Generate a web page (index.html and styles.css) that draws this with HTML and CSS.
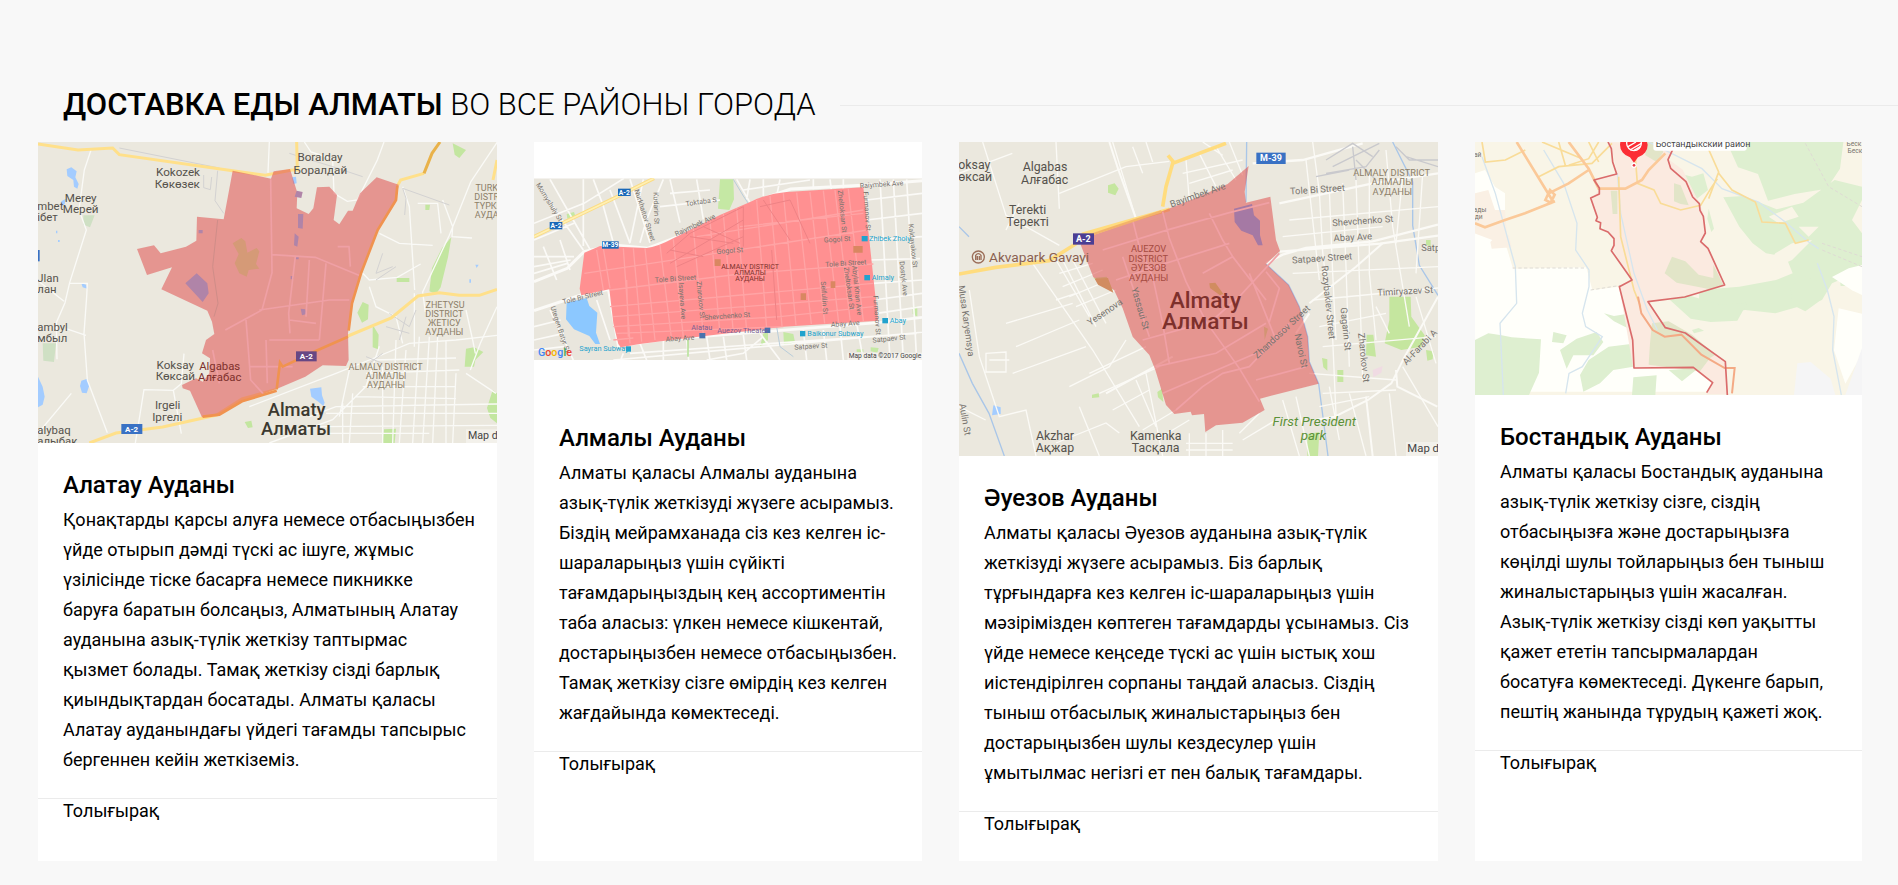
FILE: index.html
```html
<!DOCTYPE html>
<html lang="kk">
<head>
<meta charset="utf-8">
<title>Доставка еды Алматы</title>
<link rel="stylesheet" href="styles.css">
</head>
<body>
<section class="districts">
  <h2 class="heading"><span><b>ДОСТАВКА ЕДЫ АЛМАТЫ</b> ВО ВСЕ РАЙОНЫ ГОРОДА</span></h2>
  <div class="cards">

    <article class="card">
      <svg class="map" viewBox="6 6 1377 903" role="img" aria-label="Алатау ауданының картасы">
        <rect x="6" y="6" width="1377" height="903" fill="#ebe8de"/>
        <g fill="#a3ccff">
          <path d="M92 88l14-6 16 12-4 18 10 20-4 14-10-6-2-20-18-12zM76 184l14-8-4 16-10 8zM136 430l14 4 4 12-14-4zM6 710l14 30 6 30-6 24-14 8zM136 722l18-6 6 20-8 24-14-2-6-20zM822 746l34-4 2 24 8 22-4 10-14-12-22-16zM768 112l12-2 2 20-10 2zM60 272h4v8h-4zM66 300h5v6h-5zM1318 374l10 0-6 10zM1300 418h5v10h-5z"/>
        </g>
        <g fill="#c3e6a0">
          <path d="M1246 292l-10 60-22 90-14 20-20-8 8-70 30-60zM1082 414h38v12h-38zM980 486l18 8-2 44-18 10-14-30zM1010 554l18 30-2 44-16-6zM1290 626l24-4 28 14-24 24-4 20-28 0zM1370 750l13 10v90l-20-16-10-30zM1044 868l36-2-4 43h-36zM626 846l20-4 4 20-14 2zM1250 10l40 20-20 24-14-10zM1168 194l14 0-2 16-12 0z"/>
          <path d="M142 226h34l-14 36-20-8zM20 610h40l-6 56-32-4z" fill="#cfe0c4"/>
        </g>
        <g fill="none" stroke="#fafaf7" stroke-width="4">
          <path d="M165 30l-20 60-16 120 22 60-50 158-14 60-26 60 2 110M100 430l54 0-2 40-8 110 10 140 60 158M84 484l-76-60M90 566l60 20M298 909l26-160 88 2 24-20 8-90M412 751l24 130M6 880l100-120M700 6l-4 92M805 6l20 30 60 20M890 60l4 100 40 24 30-4 60-120 20-54"/>
          <path d="M1384 6l-80 120-64 160-80 170 8 60M1100 140l20 60 16 250M1145 190l60 0 10 90M1220 180l30 80-2 30 60 4M1030 280l60 30 100 6M980 400l20 20 84-8 70-40M1000 440l20 60 60 30 20 80M1135 460v160M1383 500l-50 110-30 80M1290 510l20 90 8 40"/>
          <path d="M640 800l260-100 100-40 120-50 140-10 123-14M820 830l80-30 483-8M910 830l30-140M700 909l190-70 100-100 40-120M870 820l513 0M850 860l533-4M1150 590l-20 319M1180 590l-20 319M1205 590l-15 319M1230 600l0 309M1260 700l-10 209M1080 600l-10 309M1110 630l-20 279M1040 680l0 229M980 740l280 0M960 770l300 6M990 700l280-10M1010 660l250-6M880 880l300 0M920 790l0 119M950 760l-10 149M1290 700l90 60"/>
        </g>
        <g fill="none" stroke="#d3d2d2" stroke-width="3"><path d="M545 92l-8 90 26 38M503 105l0 38 20 6 4-38M250 24l300 60M760 40l130 40 90 30M1100 145l10 30-4 50M1040 340l-20 60 50-20M1020 420l60-40M1060 520l60 40 20-50M1050 560l70 20M1090 600l20-70M990 650l50 20M1000 670l40-30M1100 145l140 50"/></g>
        <g fill="none" stroke="#ffe08a" stroke-width="9">
          <path d="M6 12l120 18 104-6 20 20 340 48 98 14 80-16h16l-2-84M1084 138l10-18 70-20M936 588l130-54 80-66 64-10 60 8 60 0 53-18M160 909l80-30 140-18 162-36 76-48 100-28M1383 60l-12 60"/>
          <path d="M1164 100l24-60 24-34" stroke="#e9b24a"/>
        </g>
        <path d="M590 92L705 116L713 94L762 87L784 158L782 205L818 222L832 205L843 142L880 140L903 165L893 240L910 253L936 212L950 212L972 160L1022 112L1088 134L1080 185L1025 270L975 400L948 490L936 580L938 660L930 678L860 676L808 710L720 748L630 780L548 824L498 832L462 752L440 745L438 735L480 715L500 725L520 700L522 655L498 640L510 600L535 582L528 545L514 512L376 448L408 382L333 405L303 327L354 316L374 340L450 320L481 302L483 230L563 238z" fill="#de4c4c" fill-opacity=".53"/>
        <path d="M590 310l26-16 12 10 6 34 28-14 8 10-10 38 10 14-32 4-6 20-22-10-14-30 12-28z" fill="#d59a77"/>
        <path d="M448 430l34-30 32 30 4 30-18 26zM782 152l18 4-4 18-20-4zM786 222l16 0-2 44-14-2zM776 280l12 10-4 30-10-4zM794 506l14 2 4 14-14 4zM488 270h12v10h-12zM780 348h8v10h-8zM764 408h8v10h-8z" fill="#b084a8"/>
        <g fill="none" stroke="#efa0a5" stroke-width="5"><path d="M704 118l4 280-30 112-110 60M708 344l130 8 136 56M778 350l-20 170 4 60M630 540l14 180 40 44M670 510l210-30 60 0M870 370l-20 230M820 360l-10 170M550 730l-20-100M700 600l150 0M690 600l4 130M905 320l34 0 4 60M640 680l130 0M760 540l80 10"/></g>
        <path d="M936 590l-90 40-106 50-8-12-10 80M1084 138l-4 42-55 90-50 130-27 90-10 82M500 830l50-6 68-40 104-32" fill="none" stroke="#f0934f" stroke-width="8"/>
        <path d="M545 240l-15 140 16 110-12 40" fill="none" stroke="#cf8d88" stroke-width="3"/>
        <rect x="780" y="634" width="62" height="30" fill="#674784"/><rect x="256" y="852" width="63" height="30" fill="#3971c4"/><rect x="6" y="330" width="5" height="34" fill="#3971c4"/>
        <g class="shield" font-size="24"><text x="811" y="658">A-2</text><text x="287" y="876">A-2</text></g>
        <g class="place" font-size="35"><text x="426" y="109">Kokozek</text><text x="424" y="143">Көкөзек</text><text x="852" y="64">Boralday</text><text x="853" y="102">Боралдай</text><text x="134" y="186">Merey</text><text x="134" y="219">Мерей</text><text x="418" y="687">Koksay</text><text x="418" y="721">Көксай</text><text x="395" y="808">Irgeli</text><text x="394" y="842">Іргелі</text></g>
        <g class="place maroon" font-size="34"><text x="551" y="689">Algabas</text><text x="551" y="724">Алғабас</text></g>
        <g class="place edge-left" font-size="34"><text x="4" y="210">mbet</text><text x="4" y="244">ібет</text><text x="4" y="426">Jlan</text><text x="4" y="460">лан</text><text x="4" y="572">ambyl</text><text x="4" y="606">мбыл</text><text x="4" y="881">alybaq</text><text x="4" y="914">алыбақ</text></g>
        <g class="area" font-size="27"><text x="1227" y="505">ZHETYSU</text><text x="1225" y="532">DISTRICT</text><text x="1225" y="559">ЖЕТІСУ</text><text x="1225" y="586">АУДАНЫ</text><text x="1049" y="691">ALMALY DISTRICT</text><text x="1050" y="718">АЛМАЛЫ</text><text x="1050" y="745">АУДАНЫ</text><text x="1352" y="153">TURK</text><text x="1352" y="180">DISTR</text><text x="1352" y="206">ТҮРКІ</text><text x="1352" y="233">АУДА</text></g>
        <g class="city" font-size="55"><text x="782" y="829">Almaty</text><text x="780" y="886">Алматы</text></g>
        <rect x="1290" y="868" width="93" height="41" fill="#f3f1eb"/><text class="credit" x="1296" y="898" font-size="32">Map d</text>
      </svg>
      <div class="body">
        <h3>Алатау Ауданы</h3>
        <p>Қонақтарды қарсы алуға немесе отбасыңызбен<br>үйде отырып дәмді түскі ас ішуге, жұмыс<br>үзілісінде тіске басарға немесе пикникке<br>баруға баратын болсаңыз, Алматының Алатау<br>ауданына азық-түлік жеткізу таптырмас<br>қызмет болады. Тамақ жеткізу сізді барлық<br>қиындықтардан босатады. Алматы қаласы<br>Алатау ауданындағы үйдегі тағамды тапсырыс<br>бергеннен кейін жеткіземіз.</p>
      </div>
      <footer class="more"><a href="#alatau">Толығырақ</a></footer>
    </article>

    <article class="card">
      <svg class="map" viewBox="12 6 1164 762" role="img" aria-label="Алмалы ауданының картасы">
        <defs><clipPath id="almaly-frame"><rect x="12" y="115" width="1164" height="545"/></clipPath></defs>
        <rect x="12" y="6" width="1164" height="762" fill="#fff"/>
        <g clip-path="url(#almaly-frame)">
          <rect x="12" y="115" width="1164" height="545" fill="#e9e6dd"/>
          <path d="M570 118h40l2 60-14 32-34-4zM110 222l22-6 4 12-24 8zM1148 500l14 0 0 30-14-8zM760 576l30 6 6 30-34 4zM700 580l14-4 0 24-24 20zM980 628h20v8h-20zM1022 622l24 2-4 14-20-4z" fill="#c5e8a4"/>
          <g fill="none" stroke="#fbfaf7" stroke-width="5">
            <path d="M30 140l60 90 70 100M60 118l80 140 40 70M160 118l0 200M190 118l30 80 30 110M12 250l150-60 120-75M12 300l120-50M240 150l60 160M300 118l60 190M340 118l-40 190M12 350l120 0M12 380l110-20M12 400l100-30M40 320l40 100M90 300l30 90M400 118l-50 120-20 70M420 118l30 130M420 160l120-10M390 200l180-20M500 118l20 120M620 118l40 70M660 118l-10 60M700 118l0 50M750 118l-10 50M640 150l200-30M850 118l0 30M900 118l4 30M940 118l0 30M1050 118l30 542M1090 118l30 542M1130 118l30 542M1010 180l166-20M1010 240l166-20M1020 300l156-10M1020 360l150-4M1030 430l146-10M1030 480l146-20M1040 520l136-20"/>
            <path d="M12 560l80-20M12 600l90-20M60 510l70 150M12 630l90-10M200 480l40 120M250 660l1000-90M280 640l-8 20M330 610l20 50M400 600l0 60M470 600l6 60M530 590l10 70M580 590l10 70M640 585l10 75M690 580l60 80M820 570l10 90M880 570l10 90M930 560l10 100M980 550l20 110M300 640l860-60M700 590l-60 50-110 20"/>
            <path d="M12 425l100-40 50-50 90-20 100 10 210-80 110-60 110-38 230-12 260-20M12 512l150-50 76-14" stroke-width="9"/>
            <path d="M235 448l30 170 140-20 260-20 380-30 131-16" stroke-width="8"/>
          </g>
          <path d="M12 290l250-120 110-55" fill="none" stroke="#fbdc84" stroke-width="11"/>
          <path d="M12 290l250-120 110-55" fill="none" stroke="#fff0b4" stroke-width="5"/>
          <path d="M610 118l30 50 20 30 4 30M740 560l10 60 40 30" fill="none" stroke="#b9cdda" stroke-width="3"/>
          <path d="M474 600v50" fill="none" stroke="#a9dd87" stroke-width="4"/>
          <path d="M110 488l60-14 8 24 24 20-4 60 12 34-14 0-18-24-46-20-24-30z" fill="#8cc8ff"/>
          <path d="M163 338L210 318L350 324Q380 322 430 295L570 225L655 188Q710 160 770 156L1000 142L1018 300L1044 542L760 560L405 602Q320 612 272 622L265 612L250 550L238 448L154 466L149 446z" fill="#ff8c8e" fill-opacity=".96"/>
          <g fill="none" stroke="#ffa4a5" stroke-width="4">
            <path d="M163 400l200-30 650-100M240 450l390-48 400-30M240 500l790-70M250 530l780-60M250 560l500-30 280-30M260 580l500-20M220 325l20 120M280 325l20 285M310 325l25 280M345 325l30 275M390 315l35 285M430 298l30 295M490 265l30 320M540 242l30 340M580 222l30 356M620 205l30 368M680 180l30 385M720 168l36 390M760 160l38 396M800 158l44 394M840 156l44 394M880 152l46 396M915 150l46 396M955 147l45 396M290 420l5 170M630 260l370-40M500 290l500-80M250 600l60-6M200 330l20 120"/>
          </g>
          <g fill="none" stroke="#ee8285" stroke-width="3"><path d="M410 340l70-60 160-80M420 370l220-130M440 380l200-90M640 200v120M480 290l130 20M520 260l110 50M690 200l90-20 60 130M700 180l80 120M420 330l100 20M725 330l15 210"/></g>
          <path d="M970 318h28v20h-28zM554 358h18v20h-18zM812 460h16v20h-16zM902 424h14v20h-14z" fill="#d98761"/>
          <rect x="264" y="146" width="38" height="22" fill="#1a68b8"/><rect x="59" y="246" width="38" height="22" fill="#1a68b8"/><rect x="216" y="304" width="50" height="22" fill="#1a68b8"/>
          <g class="shield" font-size="20"><text x="283" y="164">A-2</text><text x="78" y="264">A-2</text><text x="241" y="322">M-39</text></g>
          <g class="street" font-size="21">
            <text transform="translate(1055 140) rotate(-4)">Raiymbek Ave</text><text transform="translate(498 262) rotate(-25)">Raiymbek Ave</text><text transform="translate(922 305) rotate(-4)">Gogol St</text><text transform="translate(600 339) rotate(-4)">Gogol St</text><text transform="translate(948 377) rotate(-4)">Tole Bi Street</text><text transform="translate(437 423) rotate(-4)">Tole Bi Street</text><text transform="translate(592 535) rotate(-4)">Shevchenko St</text><text transform="translate(450 602) rotate(-4)">Abay Ave</text><text transform="translate(946 558) rotate(-4)">Abay Ave</text><text transform="translate(843 626) rotate(-4)">Satpaev St</text><text transform="translate(1078 603) rotate(-6)">Satpaev St</text><text transform="translate(160 478) rotate(-14)">Tole Bi Street</text><text transform="translate(514 192) rotate(-8)">Toktaba S</text>
            <text transform="translate(338 228) rotate(72)">Nurkhaitov Street</text><text transform="translate(372 205) rotate(88)">Kudarin St</text><text transform="translate(52 190) rotate(58)">Momyshuly St</text><text transform="translate(84 570) rotate(72)">Utegen Batyr St</text><text transform="translate(450 484) rotate(86)">Isayeva Ave</text><text transform="translate(505 480) rotate(84)">Zharokov St</text><text transform="translate(930 215) rotate(84)">Zheltoksan St</text><text transform="translate(1004 214) rotate(86)">Furmanov St</text><text transform="translate(1142 318) rotate(84)">Kaldayakov St</text><text transform="translate(1114 416) rotate(84)">Dostyk Ave</text><text transform="translate(876 474) rotate(86)">Seifullin St</text><text transform="translate(950 446) rotate(82)">Zheltoksan St</text><text transform="translate(974 452) rotate(84)">Abylai Khan Ave</text><text transform="translate(1034 526) rotate(86)">Furmanov St</text>
          </g>
          <g class="place maroon" font-size="21"><text x="660" y="387">ALMALY DISTRICT</text><text x="660" y="405">АЛМАЛЫ</text><text x="660" y="423">АУДАНЫ</text></g>
          <g fill="#22a2cd"><rect x="995" y="288" width="18" height="16"/><rect x="1003" y="405" width="17" height="16"/><rect x="1057" y="534" width="17" height="16"/><rect x="810" y="573" width="16" height="16"/><rect x="704" y="563" width="17" height="16" fill="#4a72ac"/><rect x="508" y="579" width="18" height="16" fill="#4a72ac"/><rect x="288" y="619" width="15" height="16"/></g>
          <g class="station" font-size="22"><text x="1017" y="303">Zhibek Zholy</text><text x="1025" y="420">Almaly</text><text x="1079" y="550">Abay</text><text x="832" y="587">Baikonur Subway</text><text class="tinted" x="562" y="578">Auezov Theater</text><text class="tinted" x="484" y="571">Alatau</text><text x="148" y="634">Sayran Subway</text></g>
          <text class="logo" x="24" y="648" font-size="32"><tspan fill="#4285f4">G</tspan><tspan fill="#e94335">o</tspan><tspan fill="#f5b400">o</tspan><tspan fill="#4285f4">g</tspan><tspan fill="#34a853">l</tspan><tspan fill="#e94335">e</tspan></text>
          <rect x="952" y="638" width="224" height="22" fill="#f4f2ed"/><text class="credit" x="956" y="654" font-size="20">Map data ©2017 Google</text>
        </g>
      </svg>
      <div class="body">
        <h3>Алмалы Ауданы</h3>
        <p>Алматы қаласы Алмалы ауданына<br>азық-түлік жеткізуді жүзеге асырамыз.<br>Біздің мейрамханада сіз кез келген іс-<br>шараларыңыз үшін сүйікті<br>тағамдарыңыздың кең ассортиментін<br>таба аласыз: үлкен немесе кішкентай,<br>достарыңызбен немесе отбасыңызбен.<br>Тамақ жеткізу сізге өмірдің кез келген<br>жағдайында көмектеседі.</p>
      </div>
      <footer class="more"><a href="#almaly">Толығырақ</a></footer>
    </article>

    <article class="card">
      <svg class="map" viewBox="9 6 1437 942" role="img" aria-label="Әуезов ауданының картасы">
        <rect x="9" y="6" width="1437" height="942" fill="#ebe8de"/>
        <g fill="#c5e69f"><path d="M1300 470l64 0 2 60 40 56-10 34-60 10-50-20 14-70zM1232 584l20 0 8 66-30-4zM1144 690h18v36h-18zM1098 654l16 4 0 34-12-10zM456 136l20-6 12 16-10 20-22-8zM408 764l20-4 2 12-22 2zM1054 882l36-6-4 72h-32zM604 756l14-10 4 40-16-14zM1410 630l22 4-2 24-16 4zM412 414l40-4 20 46zM1410 300l14 0 0 20-14-6zM924 560l12 6-10 34z"/></g>
        <path d="M1250 690l30-12-4 20-24 14z" fill="#f0dbe3"/>
        <path d="M112 796l22 6 0 20-26 4z" fill="#a3ccff"/>
        <g fill="none" stroke="#a9c6e8" stroke-width="4"><path d="M9 640l40 90 50 90 46 128M872 6l-2 180M930 372l68 63 32 65 25 90 5 75 28 66 28 217M1310 6l60 120 0 130 20 120 56 90M9 260l30 30"/></g>
        <g fill="none" stroke="#fbfaf6" stroke-width="4">
          <path d="M80 6l70 220 160 90M300 6l10 200M310 160l200-80 130-16M9 100l160-60M150 270l40-80M230 370l180 260 140 230M40 450l30 200 60 180 80-20 30 138M340 740l120-60 50-80M300 909l150-60 40 30M9 800l80 40M90 640l60-4 0 60-60 0zM100 660h60M470 6l70 230"/>
          <path d="M460 6l26 80 54 150M450 760l200-110" stroke-width="6"/>
          <path d="M300 360l100 170M320 440l120-50M340 470l120-50M360 500l120-50M310 400l100-30M300 480l60-20M320 360l100 200M350 360l100 190M180 620l190-80M150 550l200-60M170 700l220-80M400 700l170-80M430 760l180-80M470 810l110-60M560 870l100-60M570 700l50 248M540 720l60 140M370 800l60 148M700 880l0 68M750 880l0 68M800 870l0 78M690 910h140M690 930h140M850 880l60-60M860 900l100-60M600 900l100-60"/>
          <path d="M530 20l30 80M570 6l20 60M690 60l10 120M730 40l50 100M780 20l60 100M820 6l40 100M680 100l180-40M700 130l130-40M740 6l60 40"/>
          <path d="M972 335l300-24 174-24M970 190l280-60 196-30M890 70l60-4 90-6 180-50M930 370l50-26 70-20 200-20 196-50" stroke-width="7"/>
          <path d="M1070 6l20 150 10 180 30 260 10 230M1050 60l20 180 20 180M1120 150l10 250 10 200M1160 130l10 250 10 300M1200 120l10 290 10 310M1240 100l0 300 20 200M1290 30l20 230 50 300M1340 110l-20 200M1400 100l-20 300M1000 240l446-40M980 290l300-30M1010 400l436-20M1070 480l376-36M1090 560l200-40M1100 620l340-30M1060 700l260 20M1100 760l220-10M1090 800l150-30M980 780l50 168M1020 770l40 178M1120 740l30 160M1180 760l50 188M1300 760l20 188M1340 680l106 180M1260 500l40 80M1380 470l60 200"/>
          <path d="M1446 470l-100 180-40 80-70 50-100 50-60 10M1060 490l140-110 80-70M1230 770l20 178M1320 690l4 50 120 60M1060 520l-40 60" stroke-width="6"/>
        </g>
        <g fill="none" stroke="#c9c9cd" stroke-width="4"><path d="M1110 60l80-50 60 40M1130 80l140-70M1110 100l120-20 40-50M1190 20l10 100M1320 20l40 40 86 0M1350 50l96 30M1200 60l60 60M1080 110l100-20"/></g>
        <path d="M9 402l110-20 160-20 80-50 22-30 260-74M620 200l10-60 20-70 160-60M636 46l20 24" fill="none" stroke="#ffdc7e" stroke-width="11"/>
        <path d="M374 314L410 286L620 213L710 178L815 132L878 78L866 155L870 188L943 170L960 300L972 333L930 372L998 435L1030 500L1055 590L1060 665L1088 731L912 776L926 810L860 848L780 856L748 876L744 822L708 826L704 815L655 822L630 795L598 690L580 645L530 590L500 505L474 450L412 412z" fill="#de4c4c" fill-opacity=".53"/>
        <path d="M834 206l54-14 6 34 18 16 0 44 8 30-14 0-16-30-34-14-20-26z" fill="#a579a4"/><path d="M760 430l18-2 24 34-10 4-30-22zM416 416l40-2 16 44-46-24z" fill="#d18c60"/>
        <g fill="none" stroke="#f0a0a5" stroke-width="5"><path d="M440 330l200-62 180-50 120-30M530 240l20 80 40 90 30 140 20 120M620 215l20 80 50 130 60 120 100 140 60 100M600 680l180-40 100-60 50-30M660 810l80-70 60-40 80-20 120-130M480 420l150-50 190-60M500 350l40 120 40 120M770 540l80-70 120-130M930 395l40 50-30 100M760 220l40 80 30 50M620 760l280-120M740 400l90-50 100 130M900 720l150-40M560 600l180-50M880 400l80 200"/></g>
        <path d="M400 286l216-72" fill="none" stroke="#f3b36a" stroke-width="7"/>
        <rect x="901" y="38" width="88" height="34" fill="#3971c4"/><path d="M351 280h63v34h-63z" fill="#4b3e94"/>
        <g class="shield" font-size="27"><text x="945" y="64">M-39</text><text x="382" y="306">A-2</text></g>
        <g class="place" font-size="37"><text x="267" y="94">Algabas</text><text x="266" y="132">Алғабас</text><text x="215" y="221">Terekti</text><text x="215" y="259">Теректі</text><text x="297" y="899">Akzhar</text><text x="297" y="936">Ақжар</text><text x="599" y="899">Kamenka</text><text x="599" y="936">Тасқала</text></g>
        <g class="place edge-left" font-size="37"><text x="7" y="86">oksay</text><text x="7" y="122">өксай</text></g>
        <g transform="translate(67 351)"><circle r="18" fill="#ebe8de" stroke="#9b6d58" stroke-width="4"/><path d="M-8 9v-14q8-10 16 0v14M-3 9v-12M3 9v-12" fill="none" stroke="#9b6d58" stroke-width="4"/></g>
        <g class="place brown edge-left" font-size="41"><text x="99" y="365">Akvapark Gavayi</text></g>
        <g class="area" font-size="28"><text x="1307" y="107">ALMALY DISTRICT</text><text x="1309" y="136">АЛМАЛЫ</text><text x="1309" y="165">АУДАНЫ</text></g>
        <g class="area maroon-light" font-size="28"><text x="578" y="337">AUEZOV</text><text x="577" y="365">DISTRICT</text><text x="578" y="394">ӘУЕЗОВ</text><text x="578" y="422">АУДАНЫ</text></g>
        <g class="street" font-size="28">
          <text transform="translate(1085 158) rotate(-4)">Tole Bi Street</text><text transform="translate(1221 252) rotate(-4)">Shevchenko St</text><text transform="translate(1191 301) rotate(-3)">Abay Ave</text><text transform="translate(1099 364) rotate(-4)">Satpaev Street</text><text transform="translate(1348 463) rotate(-3)">Timiryazev St</text><text transform="translate(728 174) rotate(-19)">Bayimbek Ave</text><text transform="translate(452 524) rotate(-34)">Yesenova</text><text transform="translate(984 582) rotate(-43)">Zhandosov Street</text><text transform="translate(1398 628) rotate(-46)">Al-Farabi A</text><text transform="translate(1424 332)">Satp</text>
          <text transform="translate(544 508) rotate(74)">Yassaui St</text><text transform="translate(1108 488) rotate(84)">Rozybakiev Street</text><text transform="translate(1160 568) rotate(84)">Gagarin St</text><text transform="translate(1214 654) rotate(84)">Zharokov St</text><text transform="translate(1026 634) rotate(78)">Navoi St</text><text transform="translate(22 544) rotate(82)">Musa Karyemsya</text><text transform="translate(18 840) rotate(80)">Aulin St</text>
        </g>
        <g class="city maroon" font-size="68"><text x="748" y="504">Almaty</text><text x="748" y="567">Алматы</text></g>
        <g class="park" font-size="40"><text x="1075" y="858">First President</text><text x="1072" y="901">park</text></g>
        <rect x="1350" y="906" width="96" height="42" fill="#f3f1eb"/><text class="credit" x="1354" y="937" font-size="34">Map d</text>
      </svg>
      <div class="body">
        <h3>Әуезов Ауданы</h3>
        <p>Алматы қаласы Әуезов ауданына азық-түлік<br>жеткізуді жүзеге асырамыз. Біз барлық<br>тұрғындарға кез келген іс-шараларыңыз үшін<br>мәзірімізден көптеген тағамдарды ұсынамыз. Сіз<br>үйде немесе кеңседе түскі ас үшін ыстық хош<br>иістендірілген сорпаны таңдай аласыз. Сіздің<br>тыныш отбасылық жиналыстарыңыз бен<br>достарыңызбен шулы кездесулер үшін<br>ұмытылмас негізгі ет пен балық тағамдары.</p>
      </div>
      <footer class="more"><a href="#auezov">Толығырақ</a></footer>
    </article>

    <article class="card">
      <svg class="map" viewBox="9 6 1161 759" role="img" aria-label="Бостандық ауданының картасы">
        <rect x="9" y="6" width="1161" height="759" fill="#f9f5e7"/>
        <path d="M9 100l30-10 30 50 30 20 0 100-14 26 20 40 18 60 220-4 18 68 80-10 30-8 30 150 20 102 178-6 60 48-16 29H9z" fill="#fffffa"/>
        <path d="M9 160l40-10 20 60 30 0 6 70-44 20-53-20zM55 306l30-30 26 10 8 36-60 4z" fill="#faf0e4"/>
        <g fill="#deefd0">
          <path d="M764 6h350l-10 80-40 60-96 16-80 20-30-80-60-20zM754 172l60-4 100 40 80-20 94-68 82 20v40l-30 60 30 40v110l-90 40-30 50-140 40-90-10-80 10-60-10 2-60 120-10 110-20 50-20-20-50-60-10-40-30-40-50z"/>
          <path d="M620 100l40 10 34-10 14 50-50 40-54-10zM710 206l16 60-8 10-12-40zM594 480l50-16 100 30 82-6-30 54-80 4-60-10zM660 570l20-6 16 8-30 8zM956 440l40-32 56 20-2 50-50 36-40-20zM1104 424l36 0-4 14-30 0zM9 600l40-20 40 6 30 6 88 6-6 100-30 67H9l0-60zM244 576l40 10-10 24-34-4zM264 630l50-34 60-20 20 30-30 40-60 0-20 40zM350 660l60-40 84-10-10 70-60 10-40 40-50 25-10-50zM396 520l30 8 60-10-20 46-40-20zM484 712l70-6-4 59h-70zM590 690l90-6-50 40z"/>
        </g>
        <path d="M870 400l40-60 50-30 60-10-60 60zM746 320l60-10 30 30-10 20-80 0zM890 230l70-30 20 30-60 20zM980 260l60 0-30 30z" fill="#f9f5e7"/>
        <path d="M1170 375v90l-30-14-60-40 50-26z" fill="#fffffa"/><path d="M1100 505l70 16v120l-50 90-34-100z" fill="#fffffa"/><path d="M976 670l40-4 60 50 14 49H966zM1170 624v141h-50z" fill="#f5f5f6"/>
        <path d="M408 6l16 40 12 56-68 18 14 30-26 28 20 60 14 12 4 14 32 36-6 24 24 40 36 54-38 22 42 246 178-2 58 46-16 33h64l-8-100-120-86-60-16-52-78 110-14 120-36-50-110-22-18 14-30-6-56-12-30-20-40-30-60-44-32 14-43z" fill="#fbeae0"/>
        <path d="M416 152h20v70h-14zM600 350l40 14 40 40 44 10 0-40 30 60-40 14-100-20-36-28zM606 130l20 6 24 60-24-4-20-8zM520 6h40l14 30-20 30-34-20zM534 610l6-60 50-6 70 40 70 60-16 10-30 40-154-20z" fill="#e2e5c8"/>
        <g fill="none" stroke="#d6e5ee" stroke-width="4"><path d="M30 50l40 110 60 220 4 110-50 60 10 215M215 30l60 100 40 120-4 80 40 60 0 50-20 80 10 40 50 30-60 90-40 20-10 60M436 100l10 120 40 180 40 110 30 60M530 6l160 80 60 60 110 40 80 60 70 60 30 20M1036 370l30 80 20 80-4 100 26 135"/></g>
        <path d="M122 384l222 0M356 450l90-14M1000 10l70 130 100 60M1050 310l120 40M1170 380l-120-50" fill="none" stroke="#dedbd4" stroke-width="3" stroke-dasharray="10 7"/>
        <g fill="none" stroke="#f9dc98" stroke-width="5"><path d="M30 6l10 60 60-6 60-30M200 110l60-30 100-10 60-60M260 6l20 70M350 6l30 60M380 6l-30 50-60 20M210 6l120 50M440 110l6 180 40 160 20 50M490 50l6 80 50 20 20 40 60 20 60-14 30-50 20-30M700 6l40 90-30 80M740 100l40 50 70 36 20 60 70 4 30 60 40-10"/></g>
        <g fill="none" stroke="#fbc999" stroke-width="8"><path d="M134 6l110 180M9 250l30 12 60-22 60-20 90-36M230 160l60-30 60-40M290 6l60 80 30 60 80 0 50-26 20-30 50-50M220 180l14-30 14 14-12 24z"/></g>
        <path d="M498 470l10 50 34 50 36 20 50-6 60 60 70 40 30 0-8 76" fill="none" stroke="#f4aa85" stroke-width="6"/>
        <path d="M408 6l10 20 4 40 12 36-68 18 16 24 0 18-26 12 20 58-4 10 14 6-2 18 24 10 18 20 0 20-8 16 62 88-38 20 40 160 4 84 178-2 58 46-18 30M766 765l-6-100-120-86-60-16-52-78 110-14 120-36-40-88-10-22-22-20 14-26-6-50-10-18-2-20-20-20-20-46-46-40-8-26 14-30-40-10-14-4 16-10" fill="none" stroke="#da6b6b" stroke-width="5" stroke-linejoin="round"/>
        <path d="M444 14a41 39 0 0 0 30 38l12 16 12-16a41 39 0 0 0 29-38l-2-8h-80z" fill="#fb2d35"/><circle cx="486" cy="76" r="8" fill="#fff"/><circle cx="486" cy="76" r="4" fill="#e93943"/><circle cx="486" cy="10" r="22" fill="none" stroke="#fff" stroke-width="4"/><path d="M468 20l24-14M474 30l34-20M486 31l20-12" stroke="#fff" stroke-width="4"/>
        <rect x="544" y="-20" width="280" height="52" rx="8" fill="#fff"/><text class="credit" x="551" y="20" font-size="27">Бостандыкский район</text>
        <g class="street" font-size="20"><text x="1146" y="18">Беск</text><text x="1149" y="38">Беск</text><text x="17" y="52">ай</text><text x="24" y="216">ады</text><text x="20" y="236">ди</text></g>
      </svg>
      <div class="body">
        <h3>Бостандық Ауданы</h3>
        <p>Алматы қаласы Бостандық ауданына<br>азық-түлік жеткізу сізге, сіздің<br>отбасыңызға және достарыңызға<br>көңілді шулы тойларыңыз бен тыныш<br>жиналыстарыңыз үшін жасалған.<br>Азық-түлік жеткізу сізді көп уақытты<br>қажет ететін тапсырмалардан<br>босатуға көмектеседі. Дүкенге барып,<br>пештің жанында тұрудың қажеті жоқ.</p>
      </div>
      <footer class="more"><a href="#bostandyk">Толығырақ</a></footer>
    </article>

  </div>
</section>
</body>
</html>
```

FILE: styles.css
```css
* { box-sizing: border-box; }

body {
  margin: 0;
  background: #f8f8f8;
  color: #000;
  font-family: Roboto, "Noto Sans", sans-serif;
  font-size: 18px;
  line-height: 30px;
}

.districts { padding: 84px 0 24px; }

.heading {
  display: flex;
  align-items: center;
  gap: 24px;
  margin: 0 0 16px;
  padding-left: 63px;
  font-size: 31px;
  font-weight: 300;
  line-height: 42px;
  white-space: nowrap;
}
.heading b { font-weight: 500; }
.heading::after {
  content: "";
  flex: 1;
  height: 1px;
  background: #ebebeb;
}

.cards {
  display: grid;
  grid-template-columns: 459fr 388fr 479fr 387fr;
  gap: 37px;
  padding: 0 36px 0 38px;
}

.card { background: #fff; }

.map { display: block; width: 100%; height: auto; }

.body { padding: 25px 0 23px 25px; }
.body h3 {
  margin: 0 0 3px;
  font-size: 24px;
  font-weight: 500;
  line-height: 34px;
}
.body p { margin: 0; white-space: nowrap; }

.more {
  padding: 0 25px 25px;
  border-top: 1px solid #ebebeb;
  line-height: 24px;
}
.more a { color: inherit; text-decoration: none; }

.map text { text-anchor: middle; font-family: Roboto, "Noto Sans", sans-serif; }
.place { fill: #55524c; }
.area { fill: #8d8069; }
.city { fill: #3c3930; font-weight: 500; }
.maroon { fill: #7d302c; }
.maroon-light { fill: #a64b41; }
.brown { fill: #8a6050; }
.shield { fill: #fff; font-weight: 700; }
.street { fill: #77736e; }
.park { fill: #5b9138; font-style: italic; }
.station { fill: #25a4cd; }
.tinted { fill: #7c5f94; }
.credit { fill: #444; }
.logo { font-weight: 500; }
.map .edge-left text,
.map .station text,
.map .credit,
.map .logo { text-anchor: start; }
```
